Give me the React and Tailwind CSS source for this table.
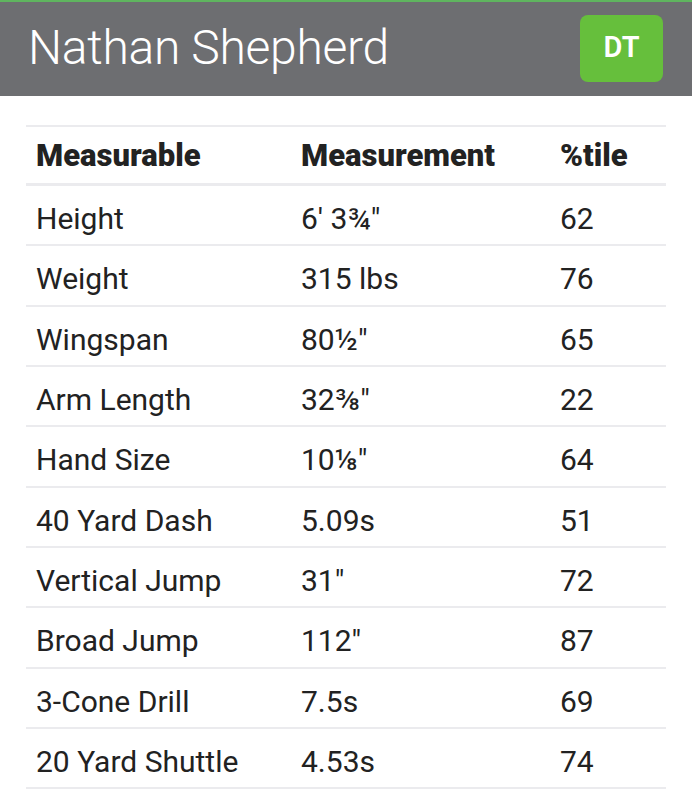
import React from 'react';

const rows = [
  ['Height', "6' 3¾\"", '62'],
  ['Weight', '315 lbs', '76'],
  ['Wingspan', '80½"', '65'],
  ['Arm Length', '32⅜"', '22'],
  ['Hand Size', '10⅛"', '64'],
  ['40 Yard Dash', '5.09s', '51'],
  ['Vertical Jump', '31"', '72'],
  ['Broad Jump', '112"', '87'],
  ['3-Cone Drill', '7.5s', '69'],
  ['20 Yard Shuttle', '4.53s', '74'],
];

const App = () => {
  return (
    <div className="w-[692px] h-[800px] overflow-hidden bg-white text-[#222222]" style={{ fontFamily: 'Roboto, "Liberation Sans", sans-serif' }}>
      <div className="h-[2px] bg-[#5fb55f]" />
      <div className="h-[94px] bg-[#6d6e71] flex items-center justify-between pl-[28px] pr-[29px]">
        <h1 className="text-[48px] font-light text-white leading-none tracking-[-0.3px] pb-[2px]">Nathan Shepherd</h1>
        <div className="w-[83px] h-[67px] rounded-[8px] bg-[#66bf3c] flex items-center justify-center text-white text-[29px] font-semibold mb-[2px]">
          DT
        </div>
      </div>

      <div className="mx-[26px] mt-[29px]">
        <div className="grid grid-cols-[265px_259px_1fr] items-center h-[61px] border-t-2 border-b-[3px] border-[#ebebee] text-[31px] font-black pt-[2px]">
          <div className="pl-[10px]">Measurable</div>
          <div className="pl-[10px]">Measurement</div>
          <div className="pl-[10px]">%tile</div>
        </div>
        {rows.map(([name, value, pct]) => (
          <div key={name} className="grid grid-cols-[265px_259px_1fr] items-center h-[60.33px] border-b-2 border-[#ebebee] text-[30px] pt-[7px]">
            <div className="pl-[10px]">{name}</div>
            <div className="pl-[10px]">{value}</div>
            <div className="pl-[10px]">{pct}</div>
          </div>
        ))}
        <div className="pl-[10px] pt-[14px] text-[30px] text-[#c8c8c8]">3.0</div>
      </div>
    </div>
  );
};

export default App;
